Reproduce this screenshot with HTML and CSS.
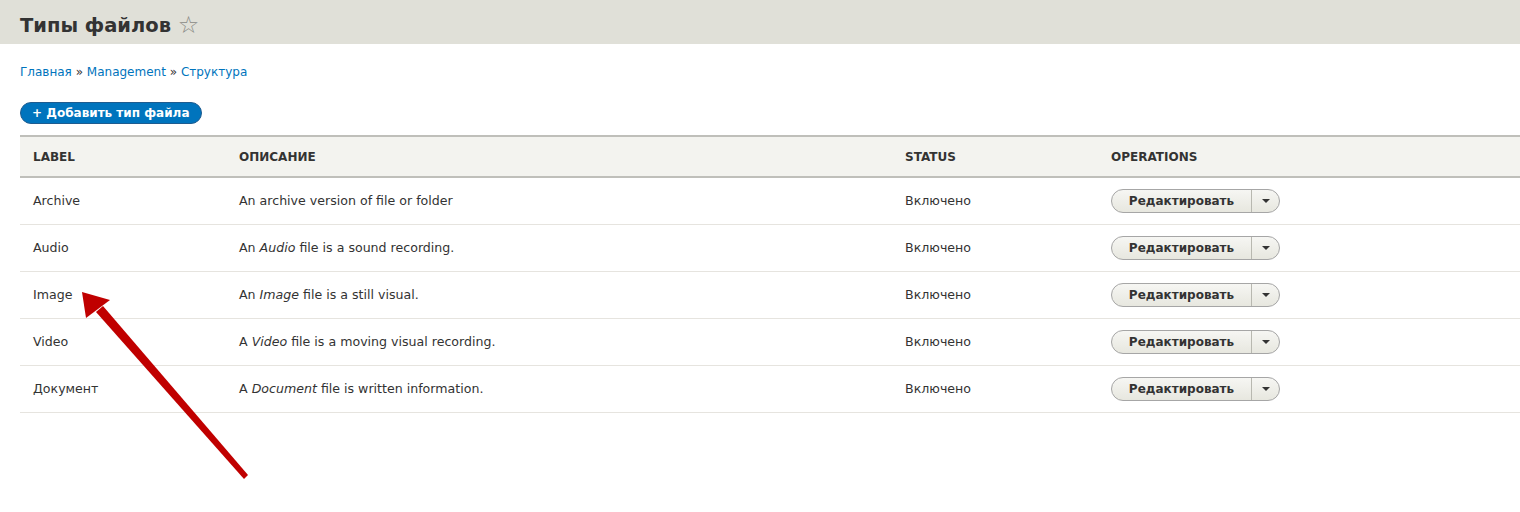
FILE: index.html
```html
<!DOCTYPE html>
<html lang="ru">

<head>
    <meta charset="UTF-8">
    <title>Типы файлов</title>
    <link rel="stylesheet" href="styles.css">
</head>

<body>
    <div class="page-header">
        <h1>Типы файлов <span class="star">&#9734;</span></h1>
    </div>

    <div class="content">
        <div class="breadcrumb">
            <a href="#">Главная</a> » <a href="#">Management</a> » <a href="#">Структура</a>
        </div>

        <div class="actions">
            <a href="#" class="btn-add">+ Добавить тип файла</a>
        </div>

        <table class="types">
            <thead>
                <tr>
                    <th class="col-label">Label</th>
                    <th class="col-desc">Описание</th>
                    <th class="col-status">Status</th>
                    <th>Operations</th>
                </tr>
            </thead>
            <tbody>
                <tr>
                    <td>Archive</td>
                    <td>An archive version of file or folder</td>
                    <td>Включено</td>
                    <td><div class="dropbutton"><span class="main">Редактировать</span><span class="toggle"></span></div></td>
                </tr>
                <tr>
                    <td>Audio</td>
                    <td>An <em>Audio</em> file is a sound recording.</td>
                    <td>Включено</td>
                    <td><div class="dropbutton"><span class="main">Редактировать</span><span class="toggle"></span></div></td>
                </tr>
                <tr>
                    <td>Image</td>
                    <td>An <em>Image</em> file is a still visual.</td>
                    <td>Включено</td>
                    <td><div class="dropbutton"><span class="main">Редактировать</span><span class="toggle"></span></div></td>
                </tr>
                <tr>
                    <td>Video</td>
                    <td>A <em>Video</em> file is a moving visual recording.</td>
                    <td>Включено</td>
                    <td><div class="dropbutton"><span class="main">Редактировать</span><span class="toggle"></span></div></td>
                </tr>
                <tr>
                    <td>Документ</td>
                    <td>A <em>Document</em> file is written information.</td>
                    <td>Включено</td>
                    <td><div class="dropbutton"><span class="main">Редактировать</span><span class="toggle"></span></div></td>
                </tr>
            </tbody>
        </table>
    </div>

    <!-- annotation arrow drawn over the page -->
    <svg class="annotation" width="1520" height="512" viewBox="0 0 1520 512">
        <polygon points="244,479 248,475 103,306 96,312" fill="#c00000" />
        <polygon points="82,292 86,318 110,300" fill="#c00000" />
    </svg>
</body>

</html>
```

FILE: styles.css
```css
* {
    box-sizing: border-box;
}

body {
    margin: 0;
    background: #fff;
    color: #333;
    font-family: "DejaVu Sans", "Liberation Sans", sans-serif;
    font-size: 12.6px;
    position: relative;
    overflow: hidden;
    height: 512px;
}

a {
    color: #0074bd;
    text-decoration: none;
}

.page-header {
    background: #e0e0d8;
    height: 44px;
    padding: 6px 20px 0;
    display: flex;
    align-items: center;
}

.page-header h1 {
    margin: 0;
    font-size: 19.5px;
    font-weight: bold;
    color: #333;
}

.star {
    font-weight: normal;
    font-size: 24px;
    color: #8a8a86;
    vertical-align: -1px;
}

.content {
    padding: 0 0 0 20px;
}

.breadcrumb {
    margin-top: 20px;
    height: 16px;
    line-height: 16px;
    font-size: 12px;
    color: #333;
}

.actions {
    margin-top: 22px;
    height: 22px;
}

.btn-add {
    display: inline-block;
    background: #0074bd;
    color: #fff;
    font-weight: bold;
    font-size: 12px;
    height: 22px;
    line-height: 21px;
    padding: 0 11px;
    border-radius: 11px;
    border: 1px solid #1e5c90;
}

.types {
    margin-top: 11px;
    width: 100%;
    border-collapse: collapse;
}

.types th {
    background: #f3f3ef;
    border-top: 2px solid #bfbfba;
    border-bottom: 2px solid #bfbfba;
    height: 41px;
    padding: 0 13px;
    text-align: left;
    text-transform: uppercase;
    font-size: 12px;
    font-weight: bold;
    color: #333;
}

.col-label {
    width: 206px;
}

.col-desc {
    width: 666px;
}

.col-status {
    width: 206px;
}

.types td {
    height: 47px;
    padding: 0 13px;
    border-bottom: 1px solid #e6e4df;
    color: #333;
}

.types em {
    font-style: italic;
}

.dropbutton {
    display: inline-flex;
    height: 24px;
    border: 1px solid #a6a6a6;
    border-radius: 12px;
    background: linear-gradient(#f6f6f3, #e7e7df);
    overflow: hidden;
    vertical-align: middle;
}

.dropbutton .main {
    width: 140px;
    line-height: 22px;
    text-align: center;
    font-weight: bold;
    font-size: 12px;
    color: #333;
    border-right: 1px solid #b8b8b0;
}

.dropbutton .toggle {
    width: 27px;
    position: relative;
}

.dropbutton .toggle::after {
    content: "";
    position: absolute;
    left: 10px;
    top: 9px;
    border-left: 4px solid transparent;
    border-right: 4px solid transparent;
    border-top: 4px solid #333;
}

.annotation {
    position: absolute;
    left: 0;
    top: 0;
    pointer-events: none;
}
```
